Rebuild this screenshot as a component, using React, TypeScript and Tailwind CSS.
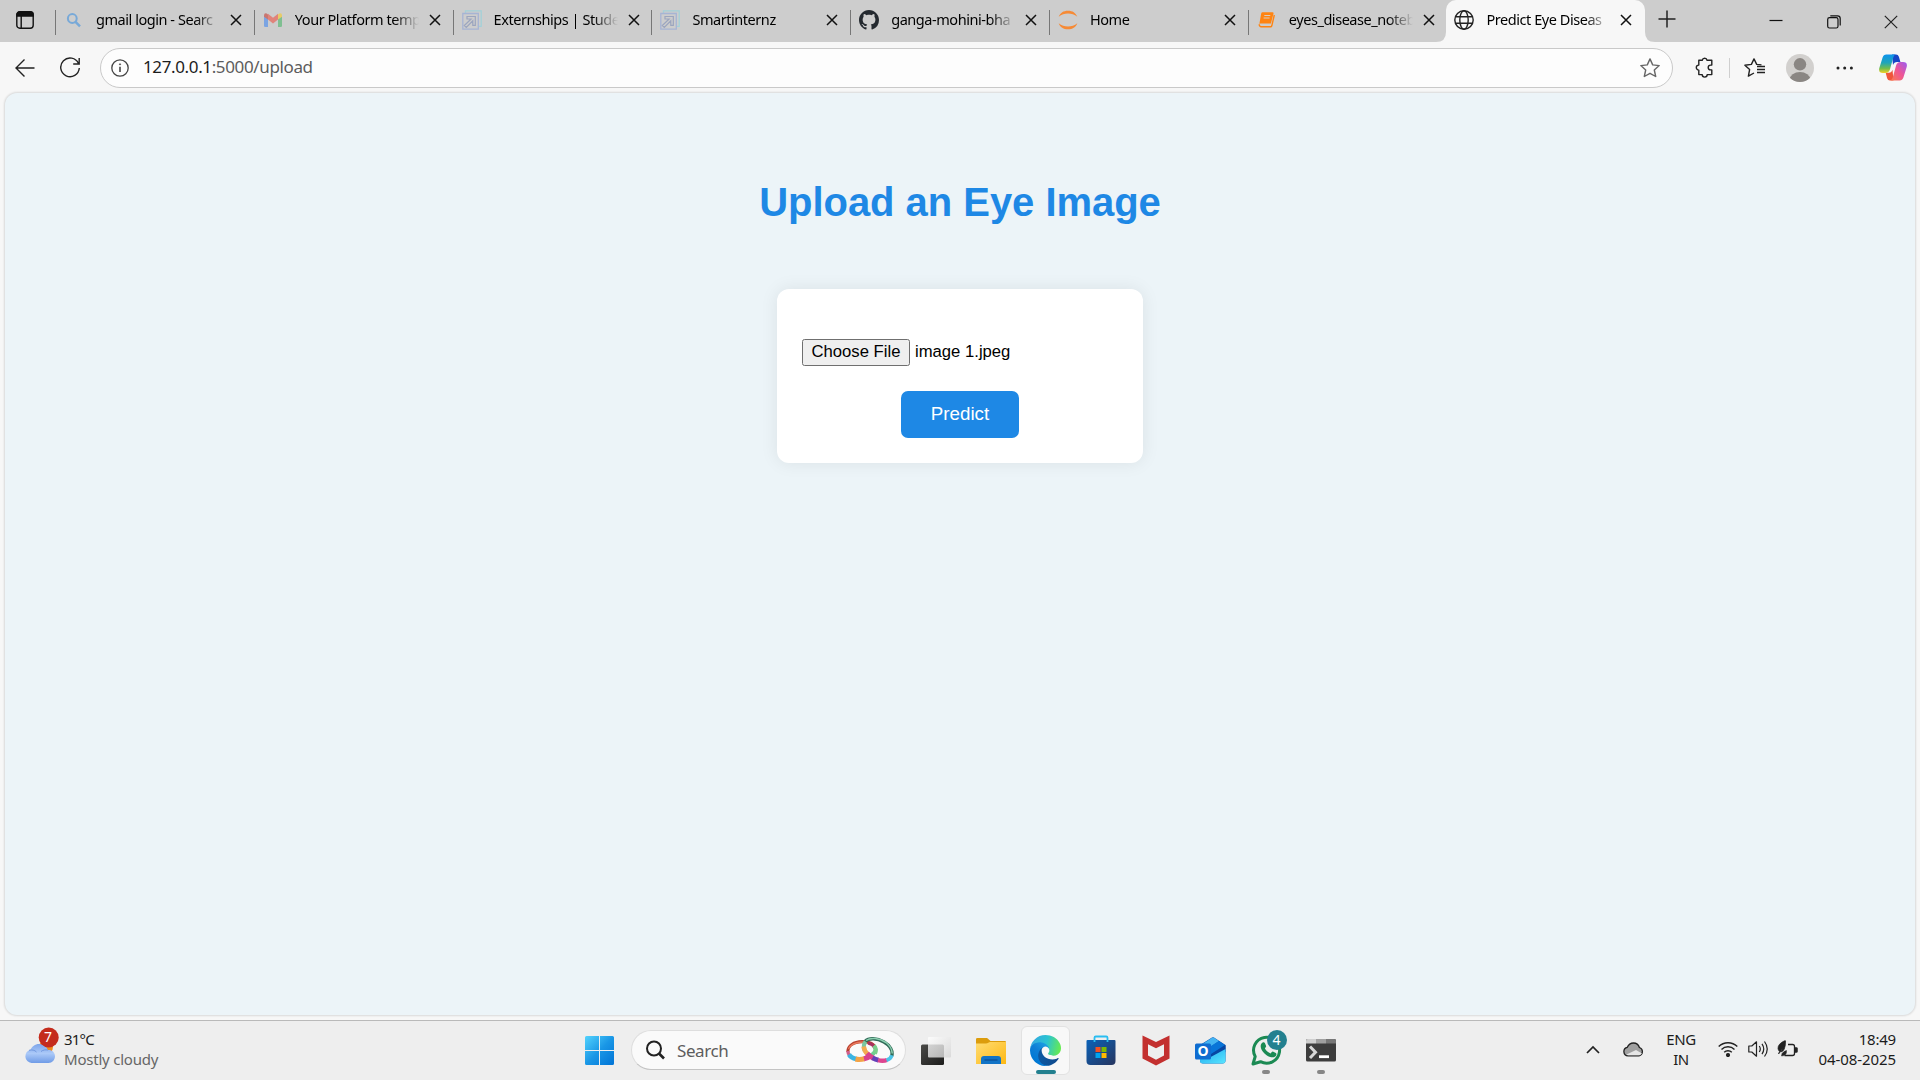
import React from "react";

type Tab = { title: string; icon: React.ReactNode };

const CloseX = () => (
  <svg width="12" height="12" viewBox="0 0 12 12" stroke="#111" strokeWidth="1.5" fill="none">
    <path d="M1 1l10 10M11 1L1 11" />
  </svg>
);

const SearchFavicon = () => (
  <svg width="20" height="20" viewBox="0 0 20 20" fill="none" stroke="#78a9d8" strokeWidth="2">
    <circle cx="8.300" cy="8.500" r="4.400" />
    <path d="M11.500 11.800l4.500 4.500" strokeWidth="2.500" />
  </svg>
);

const GmailFavicon = () => (
  <svg width="20" height="20" viewBox="0 0 20 20">
    <path d="M1 5.500v10.200q0 1.300 1.300 1.300H5V8.500z" fill="#7ba4e2" />
    <path d="M15 8.500V17h2.700q1.300 0 1.300-1.300V5.500z" fill="#7fbf91" />
    <path d="M5 3.800l5 4 5-4v5.800l-5 3.900-5-3.900z" fill="#e0837b" />
    <path d="M1 5.500q0-2.200 1.700-2.200 1 0 2.300 1.200v5L1 6.800z" fill="#c9766f" />
    <path d="M19 5.500q0-2.200-1.700-2.200-1 0-2.300 1.200v5l4-2.700z" fill="#e8cb68" />
  </svg>
);

const ArrowFavicon = () => (
  <svg width="20" height="20" viewBox="0 0 20 20" fill="none">
    <path d="M3.500 3V.8h15.700v15.500h-2.500" stroke="#a3d0d8" strokeWidth="1.300" />
    <path d="M.8 3.500h15.500v15.700H.8z" stroke="#a6b4d4" strokeWidth="1.300" />
    <path d="M5 6.500h8.300v8.800h-2.500v-4.500l-6.500 6.700-2-2 6.800-6.500H5z" stroke="#9ba5bf" strokeWidth="1.200" />
  </svg>
);

const GithubFavicon = () => (
  <svg width="20" height="20" viewBox="0 0 16 16" fill="#24292f">
    <path d="M8 0C3.580 0 0 3.580 0 8c0 3.540 2.290 6.530 5.470 7.590.4.070.55-.17.55-.38 0-.19-.01-.82-.01-1.490-2.010.37-2.530-.49-2.690-.94-.09-.23-.48-.94-.82-1.130-.28-.15-.68-.52-.01-.53.63-.01 1.080.58 1.230.82.72 1.210 1.870.87 2.330.66.070-.52.28-.87.51-1.070-1.780-.2-3.640-.89-3.640-3.950 0-.87.31-1.590.82-2.150-.08-.2-.36-1.020.08-2.120 0 0 .67-.21 2.200.82.64-.18 1.320-.27 2-.27s1.360.09 2 .27c1.530-1.040 2.200-.82 2.200-.82.44 1.100.16 1.920.08 2.120.51.56.82 1.270.82 2.150 0 3.070-1.870 3.750-3.650 3.950.29.25.54.73.54 1.480 0 1.070-.01 1.930-.01 2.200 0 .21.15.46.55.38A8.010 8.010 0 0 0 16 8c0-4.420-3.580-8-8-8z" />
  </svg>
);

const JupyterFavicon = () => (
  <svg width="20" height="20" viewBox="0 0 20 20" fill="#f68a35">
    <path d="M.7 6.800C2.200 2.800 5.500.7 10 .7s7.800 2.100 9.300 6.100C16.500 4.600 13.500 3.600 10 3.600S3.500 4.600.7 6.800z" />
    <path d="M.7 13.200c1.500 4 4.800 6.100 9.300 6.100s7.800-2.100 9.300-6.100c-2.800 2.200-5.800 3.200-9.300 3.200s-6.500-1-9.300-3.200z" />
  </svg>
);

const BookFavicon = () => (
  <svg width="20" height="20" viewBox="0 0 20 20">
    <path d="M5.500 2.200h10q1.300 0 1 1.200l-2.600 10H3.500q-1.200 0-1.300 1.300L4.200 3.500q.3-1.300 1.300-1.300z" fill="#ff8412" />
    <path d="M2.200 14.300q.2 2.500 2 2.500h9.300q1 0 1.300-1L17.300 5" fill="none" stroke="#ff8412" strokeWidth="1.400" />
    <path d="M7.300 5.500h6M6.600 8h6" stroke="#d7cdc2" strokeWidth="1" />
  </svg>
);

const GlobeFavicon = () => (
  <svg width="20" height="20" viewBox="0 0 20 20" fill="none" stroke="#222" strokeWidth="1.400">
    <circle cx="10" cy="10" r="9.200" />
    <ellipse cx="10" cy="10" rx="4.200" ry="9.200" />
    <path d="M1.500 6.800h17M1.500 13.200h17" />
  </svg>
);

const tabs: Tab[] = [
  { title: "gmail login - Searc", icon: <SearchFavicon /> },
  { title: "Your Platform temp", icon: <GmailFavicon /> },
  { title: "Externships | Stude", icon: <ArrowFavicon /> },
  { title: "Smartinternz", icon: <ArrowFavicon /> },
  { title: "ganga-mohini-bha", icon: <GithubFavicon /> },
  { title: "Home", icon: <JupyterFavicon /> },
  { title: "eyes_disease_noteb", icon: <BookFavicon /> },
];

const TabBody = ({ title, icon }: Tab) => (
  <>
    <div className="mb-0.5 w-5 shrink-0">{icon}</div>
    <div className="mb-1 ml-3 w-[124px] shrink-0 overflow-hidden text-[14.5px] leading-6 tracking-[-0.45px] whitespace-nowrap text-black [mask-image:linear-gradient(to_right,black_80%,transparent_100%)]">
      {title}
    </div>
    <div className="mb-0.5 ml-2.5">
      <CloseX />
    </div>
  </>
);

const TabStrip = () => (
  <div className="flex h-[42px] bg-[#cdcdcd]">
    <div className="flex w-[55px] shrink-0 items-center pb-[2px] pl-4">
      <svg width="18" height="18" viewBox="0 0 18 18" fill="none" stroke="#111" strokeWidth="1.400">
        <rect x=".8" y=".8" width="16.400" height="16.400" rx="3" />
        <path d="M1 3.500Q1 1 3.500 1h11Q17 1 17 3.500V5H1z" fill="#111" />
        <path d="M5.200 5v12" />
      </svg>
    </div>
    {tabs.map((t) => (
      <div key={t.title} className="flex w-[198.800px] shrink-0 items-center">
        <div className="mt-0.5 mr-2 h-[25px] w-px bg-[#777]" />
        <TabBody {...t} />
      </div>
    ))}
    <div className="relative -ml-[0.600px] flex w-[199px] shrink-0 items-center rounded-t-[10px] bg-[#f7f7f7] pl-[8.500px]">
      <svg className="absolute bottom-0 -left-2.5" width="10" height="10">
        <path d="M10 0v10H0Q10 10 10 0z" fill="#f7f7f7" />
      </svg>
      <svg className="absolute -right-2.5 bottom-0" width="10" height="10">
        <path d="M0 0v10h10Q0 10 0 0z" fill="#f7f7f7" />
      </svg>
      <TabBody title="Predict Eye Diseas" icon={<GlobeFavicon />} />
    </div>
    <div className="flex flex-1 items-center">
      <svg className="mb-1 ml-[13px]" width="18" height="18" stroke="#222" strokeWidth="1.500">
        <path d="M9 .5v17M.5 9h17" />
      </svg>
      <svg className="ml-[93px]" width="14" height="14" stroke="#111" strokeWidth="1.200">
        <path d="M.5 6.500h13" />
      </svg>
      <svg className="mt-0.5 ml-[44px]" width="14" height="14" fill="none" stroke="#111" strokeWidth="1.200">
        <rect x=".7" y="2.700" width="10.300" height="10.300" rx="1.800" />
        <path d="M3.300.8h7.200q2.700 0 2.700 2.700v7" />
      </svg>
      <svg className="mt-0.5 ml-[43.500px]" width="14" height="14" stroke="#222" strokeWidth="1.200">
        <path d="M.8.8l12.400 12.400M13.200.8L.8 13.200" />
      </svg>
    </div>
  </div>
);

const CopilotLogo = () => (
  <svg width="28" height="27" viewBox="0 0 28 27">
    <defs>
      <linearGradient id="cpA" x1="0" y1="0" x2="0" y2="1">
        <stop offset="0" stopColor="#0d93ee" />
        <stop offset=".45" stopColor="#20a5b8" />
        <stop offset=".75" stopColor="#72bd4c" />
        <stop offset="1" stopColor="#f3cf25" />
      </linearGradient>
      <linearGradient id="cpB" x1="1" y1="0" x2="0" y2="1">
        <stop offset="0" stopColor="#9a5cf2" />
        <stop offset=".5" stopColor="#ee5596" />
        <stop offset="1" stopColor="#fb7c4d" />
      </linearGradient>
    </defs>
    <path d="M13 .5h4q2.200 0 2.900 2.200l1.500 5.300h-3.400q-3 0-4 3z" fill="#1746c6" />
    <path d="M14.500 26.500h-3.500q-2.200 0-2.900-2.300L6.700 18.800h3.300q2.500 0 3.500-3z" fill="#f0553a" />
    <path d="M7.300.5h9.200q-1.500.5-2.300 3.300l-3.200 11.500q-1 3.700-4.500 3.700H4q-5 0-3.600-5.200L3.600 3.500Q4.500.5 7.300.5z" fill="url(#cpA)" />
    <path d="M20.700 26.500H11.500q1.500-.5 2.300-3.300L17 11.700Q18 8 21.500 8H24q5 0 3.600 5.200l-3.200 10.300q-1 3-3.700 3z" fill="url(#cpB)" />
  </svg>
);

const Toolbar = () => (
  <div className="flex h-[51px] items-center bg-[#f7f7f7]">
    <svg className="ml-[15px] shrink-0" width="20" height="20" fill="none" stroke="#222" strokeWidth="1.400">
      <path d="M19.500 10H1M9.500 1.500L1 10l8.500 8.500" />
    </svg>
    <svg className="ml-[24px] shrink-0" width="22" height="22" fill="none" stroke="#222" strokeWidth="1.400">
      <path d="M19.500 6.500A9.300 9.300 0 1 0 20.300 11M20.200 1v6h-6" />
    </svg>
    <div className="ml-[19px] flex h-10 w-[1573px] shrink-0 items-center rounded-full border border-[#c9c9c9] bg-[#fdfdfd]">
      <svg className="ml-2.5 shrink-0" width="18" height="18" fill="none" stroke="#444" strokeWidth="1.300">
        <circle cx="9" cy="9" r="8.200" />
        <path d="M9 7.800v5.200" strokeWidth="1.600" />
        <circle cx="9" cy="5.300" r=".6" fill="#444" strokeWidth=".8" />
      </svg>
      <div className="mb-px ml-3.5 flex-1 text-[17px] tracking-[-0.370px] text-[#5c5c5c]">
        <span className="text-[#1c1c1c]">127.0.0.1</span>:5000/upload
      </div>
      <svg className="mr-3 shrink-0" width="20" height="20" fill="none" stroke="#666" strokeWidth="1.400" strokeLinejoin="round">
        <path d="M10 .9l2.700 6 6.500.7-4.900 4.400 1.400 6.500L10 15.300l-5.700 3.200L5.700 12 .8 7.600l6.500-.7z" />
      </svg>
    </div>
    <svg className="ml-[22px] shrink-0" width="19" height="21" fill="none" stroke="#222" strokeWidth="1.400" strokeLinejoin="round">
      <path d="M3.800 3.300h3.400a2.500 2.500 0 0 1 4.900 0h4.700v4.800h-1.200a2.400 2.400 0 0 0 0 4.800h1.200v4.700h-4.600a2.500 2.500 0 0 1-5 0H3.800v-4.500a2.500 2.500 0 0 1 0-5z" />
    </svg>
    <div className="ml-[15px] h-5 w-px bg-[#cfcfcf]" />
    <svg className="ml-[14px] shrink-0" width="21" height="20" fill="none" stroke="#222" strokeWidth="1.400" strokeLinejoin="round">
      <path d="M17.500 6.900l-4.800-.5L10 .9 7.400 6.400.9 7.200l4.700 4.400-1.200 6.500L10 15" />
      <path d="M13 9.500h8M13 12.500h8M13 15.500h8" transform="translate(0 -1)" />
    </svg>
    <svg className="ml-[21px] shrink-0" width="28" height="28">
      <defs>
        <clipPath id="avatar">
          <circle cx="14" cy="14" r="14" />
        </clipPath>
      </defs>
      <circle cx="14" cy="14" r="14" fill="#d2d0ce" />
      <g clipPath="url(#avatar)" fill="#8a8683">
        <circle cx="14" cy="10.300" r="6.200" />
        <ellipse cx="14" cy="25.500" rx="10.300" ry="7.600" />
      </g>
    </svg>
    <svg className="ml-[22px] shrink-0" width="18" height="4" fill="#222">
      <circle cx="2" cy="2" r="1.500" />
      <circle cx="8.700" cy="2" r="1.500" />
      <circle cx="15.400" cy="2" r="1.500" />
    </svg>
    <div className="ml-[25px]">
      <CopilotLogo />
    </div>
  </div>
);

const Page = () => (
  <div className="h-[927px] bg-[#f7f7f7] px-[5px]">
    <div className="flex h-[922px] flex-col items-center rounded-xl bg-[#ecf4f8] pt-[86px] font-['Liberation_Sans',Arial,sans-serif] shadow-[0_0_2px_1px_rgba(0,0,0,0.12)]">
      <h1 className="text-[40px] leading-[46px] font-bold tracking-[-0.040px] text-[#1e88e5]">Upload an Eye Image</h1>
      <div className="mt-[64px] flex h-[174px] w-[366px] flex-col items-center rounded-xl bg-white px-[25px] pt-[50px] shadow-[0_0_18px_rgba(0,0,0,0.08)]">
        <div className="flex w-full items-center text-[16.670px] text-black">
          <button className="h-[27px] w-[108px] rounded-[2.500px] border border-[#6f6f6f] bg-[#efefef] pb-0.5 leading-[23px]">
            Choose File
          </button>
          <span className="ml-[5px] pb-0.5 leading-[25px]">image 1.jpeg</span>
        </div>
        <button className="mt-[25px] h-[47px] w-[118px] rounded-[7px] bg-[#1e88e5] pb-px text-[18.750px] text-white">
          Predict
        </button>
      </div>
    </div>
  </div>
);

const WeatherIcon = () => (
  <svg width="36" height="38" viewBox="0 0 36 38">
    <defs>
      <linearGradient id="cloud" x1="0" y1="0" x2="0" y2="1">
        <stop offset="0" stopColor="#7ea5ea" />
        <stop offset=".5" stopColor="#abc9f8" />
        <stop offset="1" stopColor="#6f9be6" />
      </linearGradient>
    </defs>
    <circle cx="22" cy="20" r="7" fill="#f08a1c" />
    <path d="M7.500 36a6.700 6.700 0 0 1-1-13.200C8 19.500 11 17 15 17c4.500 0 7.500 2.500 8.800 6 3.800-.5 7.200 2.300 7.200 6.300 0 3.700-2.800 6.700-6.500 6.700z" fill="url(#cloud)" />
    <path d="M5 23.300c3-.8 5.500-.3 7.500 1.700M17 24.500c2-1.600 4.500-2 7-1.500" fill="none" stroke="#7198de" strokeWidth="1" />
    <circle cx="24.700" cy="10.500" r="10" fill="#c42b1c" />
  </svg>
);

const StartIcon = () => (
  <svg width="29" height="29" viewBox="0 0 29 29">
    <defs>
      <linearGradient id="win" gradientUnits="userSpaceOnUse" x1="0" y1="0" x2="29" y2="29">
        <stop offset="0" stopColor="#53d3fd" />
        <stop offset=".5" stopColor="#1a97e6" />
        <stop offset="1" stopColor="#0073d6" />
      </linearGradient>
    </defs>
    <path d="M1.500 0H14v14H0V1.500Q0 0 1.500 0zM15 0h12.500Q29 0 29 1.500V14H15zM0 15h14v14H1.500Q0 29 0 27.500zM15 15h14v12.500q0 1.500-1.500 1.500H15z" fill="url(#win)" />
  </svg>
);

const RingsIcon = () => (
  <svg width="48" height="27" viewBox="0 0 48 27" fill="none">
    <path d="M1.800 15C1.800 8.500 8 5 16 4.700c7-.3 13.200 2.300 13.500 8" stroke="#b8402f" strokeWidth="3.200" />
    <path d="M2.500 12C4.500 7.500 10 5.200 17 5" stroke="#ea7a5c" strokeWidth="1.300" />
    <path d="M22 6q5 1.200 7 5" stroke="#a8305f" strokeWidth="3" />
    <path d="M1.800 14q.2 3 2.200 5" stroke="#d0608a" strokeWidth="3.400" />
    <path d="M3 17.500q2 3.300 7.500 4.600" stroke="#3bb4e2" strokeWidth="4.600" />
    <path d="M9.500 22q4 1 9-.2" stroke="#f3a347" strokeWidth="5" />
    <path d="M18 21.800q4-.8 7.500-3.300" stroke="#d8408c" strokeWidth="5" />
    <path d="M25 18.500q4.500-2.800 5-7" stroke="#6fcf94" strokeWidth="4" />
    <path d="M19 4.500C23 .5 31 1 38 5c6 3.500 9 9 7.800 14" stroke="#2f6a57" strokeWidth="3.400" />
    <path d="M20 3.500C25 0 33 1 40 5.500c4 3 6 6.500 6.300 11" stroke="#8ccfb0" strokeWidth="1.500" />
    <path d="M19.500 4.500q-2.800 4-1 9" stroke="#7cc6a0" strokeWidth="4" />
    <path d="M17.700 9.500q.4 4.500 4.300 8" stroke="#f3ab50" strokeWidth="4.600" />
    <path d="M21 16.500q2.500 2.800 6.500 4.800" stroke="#d8408c" strokeWidth="5" />
    <path d="M26.500 20.800q3 1.600 6 2.300" stroke="#6340b8" strokeWidth="4.800" />
    <path d="M32 23.200q5 1.300 9-.2" stroke="#dd4690" strokeWidth="4.400" />
    <path d="M40.500 23.200q4.300-1.200 5.300-5" stroke="#4bc4e8" strokeWidth="3.600" />
    <path d="M28 8.500q3 4 1 8" stroke="#79cf8a" strokeWidth="4" />
  </svg>
);

const TaskViewIcon = () => (
  <svg width="30" height="30" viewBox="0 0 30 30">
    <defs>
      <linearGradient id="tvA" x1="0" y1="0" x2="1" y2="1">
        <stop offset="0" stopColor="#4a4a48" />
        <stop offset="1" stopColor="#1c1c1b" />
      </linearGradient>
      <linearGradient id="tvB" x1="0" y1="0" x2="1" y2="1">
        <stop offset="0" stopColor="#ffffff" />
        <stop offset="1" stopColor="#d4d4d4" />
      </linearGradient>
    </defs>
    <rect x="0" y="8.500" width="23" height="20.500" rx="1.500" fill="url(#tvA)" />
    <rect x="7" y="1" width="23" height="20.500" rx="1" fill="url(#tvB)" opacity=".8" />
  </svg>
);

const FolderIcon = () => (
  <svg width="30" height="28" viewBox="0 0 30 28">
    <defs>
      <linearGradient id="fold" x1="0" y1="0" x2="1" y2="1">
        <stop offset="0" stopColor="#ffdc73" />
        <stop offset="1" stopColor="#fdb813" />
      </linearGradient>
    </defs>
    <path d="M0 2Q0 1 1.500 1h9.300q1 0 2 1.500L14.500 4H29q1 0 1 1.200V9H0z" fill="#dc9c0c" />
    <path d="M0 6.500h10q1.300 0 2.300-.8.9-.7 2-.7H30v22H0z" fill="url(#fold)" />
    <path d="M5 27v-5q0-3 3-3h14q3 0 3 3v5z" fill="#1173c6" />
    <path d="M8.500 23h13" stroke="#0a4f96" strokeWidth="1.300" />
  </svg>
);

const EdgeIcon = () => (
  <svg width="31" height="31" viewBox="0 0 256 256">
    <defs>
      <linearGradient id="edA" gradientUnits="userSpaceOnUse" x1="63" y1="177" x2="241" y2="177">
        <stop offset="0" stopColor="#0c59a4" />
        <stop offset="1" stopColor="#114a8b" />
      </linearGradient>
      <linearGradient id="edB" gradientUnits="userSpaceOnUse" x1="157" y1="99" x2="46" y2="221">
        <stop offset="0" stopColor="#1b9de2" />
        <stop offset=".5" stopColor="#0f7fd6" />
        <stop offset="1" stopColor="#0078d4" />
      </linearGradient>
      <linearGradient id="edC" gradientUnits="userSpaceOnUse" x1="10" y1="60" x2="250" y2="120">
        <stop offset="0" stopColor="#35a9e0" />
        <stop offset=".5" stopColor="#2bc3d2" />
        <stop offset="1" stopColor="#66eb50" />
      </linearGradient>
    </defs>
    <path d="M231 190.500c-3.400 1.800-6.900 3.400-10.500 4.700a101.900 101.900 0 0 1-35.900 6.500c-47.300 0-88.500-32.500-88.500-74.300 0-11.400 6.300-22.100 16.400-27.500-42.800 1.800-53.800 46.400-53.800 72.500 0 73.900 68.100 81.400 82.800 81.400 7.900 0 19.800-2.300 27-4.600l1.300-.4a128.300 128.300 0 0 0 66.600-52.800 4 4 0 0 0-5.400-5.500z" fill="url(#edA)" />
    <path d="M105.700 241.400a79.200 79.200 0 0 1-22.700-21.300 80.700 80.700 0 0 1 29.500-120.200c3.100-1.500 8.500-4.100 15.600-4a32.400 32.400 0 0 1 25.700 13c4 5.400 6.200 11.900 6.300 18.700 0-.2 24.500-79.600-80-79.600C36.100 48 0 89.700 0 126.200a130.600 130.600 0 0 0 12.100 56 128 128 0 0 0 156.400 67.100 75.500 75.500 0 0 1-62.800-7.900z" fill="url(#edB)" />
    <path d="M152.300 148.900c-.8 1-3.300 2.500-3.300 5.700 0 2.600 1.700 5.100 4.700 7.200 14.400 10 41.500 8.700 41.600 8.700a59.600 59.600 0 0 0 30.300-8.300 61.400 61.400 0 0 0 30.400-52.900c.3-22.400-8-37.300-11.300-43.900C223.500 23.900 177.700 0 128 0A128 128 0 0 0 0 126.200c.5-36.500 36.800-66 80-66 3.500 0 23.500.3 42 10 16.300 8.600 24.900 18.900 30.800 29.200 6.200 10.700 7.300 24.100 7.300 29.500 0 5.300-2.700 13.300-7.800 20z" fill="url(#edC)" />
  </svg>
);

const StoreIcon = () => (
  <svg width="30" height="31" viewBox="0 0 30 31">
    <defs>
      <linearGradient id="store" x1="0" y1="0" x2="1" y2="1">
        <stop offset="0" stopColor="#0b62b8" />
        <stop offset="1" stopColor="#26345e" />
      </linearGradient>
    </defs>
    <path d="M.5 6q0-1 1-1h27q1 0 1 1v20q0 4-4 4h-21q-4 0-4-4z" fill="url(#store)" />
    <path d="M8.500 7V2.800q0-1.300 1.300-1.300h10.400q1.300 0 1.300 1.300V7" fill="none" stroke="#29bdf1" strokeWidth="1.800" />
    <path d="M9.500 12H14.500v5h-5z" fill="#f25022" />
    <path d="M15.500 12h5v5h-5z" fill="#7fba00" />
    <path d="M9.500 18h5v5h-5z" fill="#00a4ef" />
    <path d="M15.500 18h5v5h-5z" fill="#ffb900" />
  </svg>
);

const McAfeeIcon = () => (
  <svg width="28" height="31" viewBox="0 0 28 31">
    <path fillRule="evenodd" d="M.5.5L14 7 27.500.5v23L14 30.500.5 23.500zM6 9.200v11.300l8 4.200 8-4.200V9.200l-8 4z" fill="#c3302f" />
  </svg>
);

const OutlookIcon = () => (
  <div className="relative h-[27px] w-[31px]">
    <svg width="31" height="27" viewBox="0 0 31 27">
      <defs>
        <linearGradient id="ol" x1="0" y1="0" x2="1" y2="1">
          <stop offset="0" stopColor="#1da8ee" />
          <stop offset="1" stopColor="#59e5ff" />
        </linearGradient>
      </defs>
      <path d="M5 8L17 .5q1-.6 2 0L30.500 8v15.500q0 3-3 3H8q-3 0-3-3z" fill="#0a50ab" />
      <path d="M6 8L17 .8q1-.6 2 0l5 3.200L8 15z" fill="#43b3f2" />
      <path d="M8 14L24 4l6 4L10 21z" fill="#0874d8" />
      <path d="M10 21L30.500 8v7L14 26z" fill="#0646a3" />
      <path d="M5 20l7 2L30.500 12v11.500q0 3-3 3H8q-3 0-3-3z" fill="url(#ol)" />
      <rect x="0" y="6.500" width="16" height="16" rx="1.500" fill="#0f6cd0" />
    </svg>
    <span className="absolute top-[6px] left-0 w-4 text-center text-[14px] leading-4 font-bold text-white">O</span>
  </div>
);

const WhatsAppIcon = () => (
  <div className="relative h-[37px] w-9">
    <svg width="36" height="37" viewBox="0 0 36 37" fill="none">
      <path d="M2 35l2.200-7.500A13 13 0 1 1 9.500 32.700z" stroke="#1b8a53" strokeWidth="3" strokeLinejoin="round" />
      <path d="M10.500 14.500c1.500-1.800 3-1.700 3.700.2l.9 2.300c.3 1-.8 1.700-1.200 2.500 1.500 2.500 3.200 3.900 5.700 4.900.9-.8 1.500-2.200 2.700-1.700l2.500 1.300c1.300.8.400 2.800-1 3.700-3 1.700-7.300-.3-10.300-3.200-3.200-3-5-7.200-3-10z" fill="#1b8a53" />
      <circle cx="26" cy="11" r="10" fill="#23808f" />
    </svg>
    <span className="absolute top-px left-4 w-5 text-center text-[14px] leading-5 text-white">4</span>
  </div>
);

const TerminalIcon = () => (
  <svg width="30" height="23" viewBox="0 0 30 23">
    <rect width="30" height="22.500" rx="1.500" fill="#3d3d3d" />
    <path d="M1.500 0H10v4.500H0v-3Q0 0 1.500 0z" fill="#cfcfcf" />
    <path d="M10 0h10v4.500H10z" fill="#a0a0a0" />
    <path d="M20 0h8.500Q30 0 30 1.500v3H20z" fill="#777" />
    <path d="M4 7.500l5.500 5.700L4 19" fill="none" stroke="#d8d8d8" strokeWidth="3" />
    <path d="M13 17.700h10" stroke="#fff" strokeWidth="2.800" />
  </svg>
);

const Slot = ({ children, running }: { children: React.ReactNode; running?: boolean }) => (
  <div className="relative flex h-full w-[55px] shrink-0 items-center justify-center">
    {children}
    {running && <div className="absolute bottom-[6px] h-1 w-2 rounded-full bg-[#868686]" />}
  </div>
);

const Taskbar = () => (
  <div className="flex h-[60px] border-t border-[#b9b9b9] bg-[#eeeeee]">
    <div className="flex w-[584px] shrink-0 pl-6">
      <div className="relative mt-[6px] h-[38px] w-9">
        <WeatherIcon />
        <span className="absolute top-0 left-[14px] w-5 text-center text-[14px] leading-5 text-white">7</span>
      </div>
      <div className="mt-[8px] ml-[4px] text-[15px] leading-5 tracking-[-0.220px] text-[#1c1c1c]">
        <div className="tracking-[-0.8px]">31°C</div>
        <div className="text-[#666]">Mostly cloudy</div>
      </div>
    </div>
    <div className="mt-[15px] ml-[1px] w-[29px] shrink-0">
      <StartIcon />
    </div>
    <div className="mt-[9px] ml-[17px] flex h-10 w-[275px] shrink-0 items-center rounded-full border border-[#dedede] border-b-[#c4c4c4] bg-[#fafafa]">
      <svg className="ml-[14px] shrink-0" width="19" height="20" fill="none" stroke="#222" strokeWidth="2">
        <circle cx="8" cy="8.500" r="7" />
        <path d="M13 13.500l5 5" strokeWidth="2.600" />
      </svg>
      <span className="mt-px ml-3 flex-1 text-[17px] tracking-[-0.4px] text-[#5d5d5d]">Search</span>
      <div className="mr-[11px]">
        <RingsIcon />
      </div>
    </div>
    <div className="ml-[2px] flex h-full shrink-0">
      <Slot><TaskViewIcon /></Slot>
      <Slot><FolderIcon /></Slot>
      <Slot>
        <div className="relative flex size-[49px] items-center justify-center rounded-md border border-[#e2e2e2] bg-[#f8f8f8]">
          <EdgeIcon />
          <div className="absolute bottom-0 h-1 w-5 rounded-full bg-[#23808f]" />
        </div>
      </Slot>
      <Slot><StoreIcon /></Slot>
      <Slot><McAfeeIcon /></Slot>
      <Slot><OutlookIcon /></Slot>
      <Slot running>
        <div className="-mt-[7px] ml-1.5"><WhatsAppIcon /></div>
      </Slot>
      <Slot running><TerminalIcon /></Slot>
    </div>
    <div className="flex flex-1 items-center justify-end pr-6 text-[#1c1c1c]">
      <svg className="mb-[3px]" width="14" height="9" fill="none" stroke="#222" strokeWidth="1.700">
        <path d="M1 8l6-6 6 6" />
      </svg>
      <svg className="mb-[3px] ml-[23px]" width="21" height="15" viewBox="0 0 21 15">
        <path d="M5 13.800a4.300 4.300 0 0 1-.7-8.500C5.500 2.500 7.700 1 10.500 1c3 0 5 1.700 5.900 4.500a4.300 4.300 0 0 1-.4 8.300z" fill="#a0a0a0" stroke="#222" strokeWidth="1.300" />
        <path d="M3 12.800L13 8l6 3.500-2 1.700H5z" fill="#e6e6e6" />
      </svg>
      <div className="mb-[3px] ml-[15px] w-[44px] text-center text-[15px] leading-5 tracking-[-0.4px]">
        <div>ENG</div>
        <div>IN</div>
      </div>
      <svg className="mb-[3px] ml-[15px]" width="20" height="16" fill="none" stroke="#222" strokeWidth="1.400">
        <path d="M.7 5.500a13.300 13.300 0 0 1 18.600 0M3.500 8.500a9.200 9.200 0 0 1 13 0M6.200 11.300a5.400 5.400 0 0 1 7.600 0" />
        <circle cx="10" cy="14" r="1.400" fill="#222" />
      </svg>
      <svg className="mb-[3px] ml-[10px]" width="20" height="18" fill="none" stroke="#222" strokeWidth="1.200" strokeLinejoin="round">
        <path d="M.8 6h3L8.500 1.800v14.400L3.800 12h-3z" />
        <path d="M11.300 6q2 3 0 6M14 3.800q3.500 5.200 0 10.400M16.500 1.500q5.500 7.500 0 15" />
      </svg>
      <svg className="mb-[4px] ml-[9px]" width="21" height="18" fill="none" stroke="#222" strokeWidth="1.300">
        <path d="M11 4.500h4.500q2 0 2 2v7q0 2-2 2h-8" />
        <path d="M18 7.500h1.500q1 0 1 1v3q0 1-1 1H18z" fill="#222" strokeWidth=".5" />
        <path d="M7.500.8Q.8 4 1 8.500q.2 2 1.500 2.800l-1 2.700q3-3 4-6-.3 2.500-1.700 4 2.500-.5 3.500-3 1.500-4 1.200-8.200z" fill="#222" strokeWidth=".7" />
        <path d="M4.500 16q0-3 2.200-4.200Q8 11 9.500 10.500q.3 3-1.200 4.300-1.300 1-3.800 1.200z" fill="#222" strokeWidth=".5" />
      </svg>
      <div className="mb-[4px] ml-[20px] w-[78px] text-right text-[15px] leading-5 whitespace-nowrap">
        <div className="tracking-[-0.2px]">18:49</div>
        <div className="-ml-2 tracking-[-0.080px]">04-08-2025</div>
      </div>
    </div>
  </div>
);

export default function App() {
  return (
    <div className="flex h-[1080px] w-[1920px] flex-col overflow-hidden font-['Noto_Sans','Open_Sans',sans-serif]">
      <TabStrip />
      <Toolbar />
      <Page />
      <Taskbar />
    </div>
  );
}
